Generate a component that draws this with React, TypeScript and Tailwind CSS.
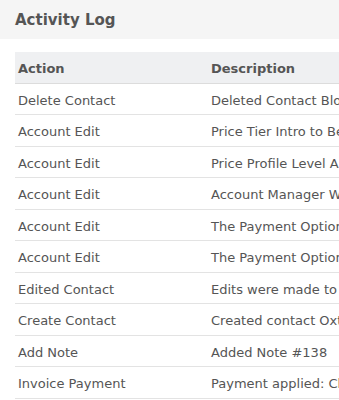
const rows: [string, string][] = [
  ["Delete Contact", "Deleted Contact Blowfish Enterprises"],
  ["Account Edit", "Price Tier Intro to Best Value"],
  ["Account Edit", "Price Profile Level A to B"],
  ["Account Edit", "Account Manager Wendy Smith"],
  ["Account Edit", "The Payment Option changed"],
  ["Account Edit", "The Payment Option changed"],
  ["Edited Contact", "Edits were made to contact"],
  ["Create Contact", "Created contact Oxtail Farms"],
  ["Add Note", "Added Note #138"],
  ["Invoice Payment", "Payment applied: Check #4411"],
];

const App = () => {
  return (
    <div className="w-[339px] h-[400px] overflow-hidden bg-white text-[#555] font-['DejaVu_Sans',sans-serif]">
      <div className="h-[39px] bg-[#f5f5f5] pl-[15px] flex items-center">
        <h1 className="text-[15px] font-bold pt-[2px]">Activity Log</h1>
      </div>
      <div className="pl-[15px] pt-[13px]">
        <table className="w-[500px] text-[13px] border-collapse table-fixed">
          <thead>
            <tr className="h-[31px] bg-[#eff0f2] border-b border-[#dcdcdc]">
              <th className="w-[192px] text-left font-bold pl-[3px] pt-[3px]">Action</th>
              <th className="text-left font-bold pl-[4px] pt-[3px]">Description</th>
            </tr>
          </thead>
          <tbody>
            {rows.map(([action, desc], i) => (
              <tr key={i} className="h-[31.5px] border-b border-[#e3e3e3]">
                <td className="pl-[3px] pt-[3px] whitespace-nowrap">{action}</td>
                <td className="pl-[4px] pt-[3px] whitespace-nowrap">{desc}</td>
              </tr>
            ))}
          </tbody>
        </table>
      </div>
    </div>
  );
};

export default App;
